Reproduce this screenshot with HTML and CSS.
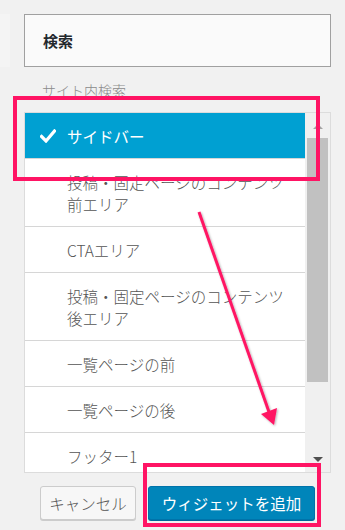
FILE: index.html
```html
<!DOCTYPE html>
<html lang="ja">
<head>
<meta charset="utf-8">
<link rel="stylesheet" href="styles.css">
</head>
<body>
<div class="page">
  <div class="side-stub"></div>
  <div class="panel">
    <div class="title-box">検索</div>
    <div class="label">サイト内検索</div>
    <div class="list-box">
      <ul class="list">
        <li class="item selected"><svg class="check" width="16" height="14" viewBox="0 0 16 14"><path d="M1.5 7.5 L6 12 L14.5 2" fill="none" stroke="#fff" stroke-width="3.2" stroke-linecap="square"/></svg>サイドバー</li>
        <li class="item">投稿・固定ページのコンテンツ前エリア</li>
        <li class="item">CTAエリア</li>
        <li class="item">投稿・固定ページのコンテンツ後エリア</li>
        <li class="item">一覧ページの前</li>
        <li class="item">一覧ページの後</li>
        <li class="item">フッター1</li>
      </ul>
      <div class="scrollbar">
        <span class="arrow-up"></span>
        <div class="thumb"></div>
        <span class="arrow-down"></span>
      </div>
    </div>
    <div class="actions">
      <button class="btn btn-cancel">キャンセル</button>
      <button class="btn btn-primary">ウィジェットを追加</button>
    </div>
  </div>
  <svg class="annot" width="345" height="530" viewBox="0 0 345 530">
    <defs>
      <filter id="sh" x="-20%" y="-20%" width="140%" height="140%">
        <feDropShadow dx="1" dy="1" stdDeviation="1" flood-color="#000" flood-opacity="0.3"/>
      </filter>
    </defs>
    <rect x="15" y="98" width="303" height="81" fill="none" stroke="#ff1464" stroke-width="4"/>
    <rect x="145" y="465" width="174" height="60" fill="none" stroke="#ff1464" stroke-width="4"/>
    <g filter="url(#sh)">
      <line x1="199" y1="212" x2="269" y2="412" stroke="#ff1464" stroke-width="3"/>
      <polygon points="274,425 261,414 277,408" fill="#ff1464"/>
    </g>
  </svg>
</div>
</body>
</html>
```

FILE: styles.css
```css
* { box-sizing: border-box; }
html, body {
  margin: 0;
  padding: 0;
  background: #f1f1f1;
}
body {
  font-family: "Noto Sans CJK JP", "Noto Sans", sans-serif;
  color: #555;
}
.page {
  position: relative;
  width: 345px;
  height: 530px;
  overflow: hidden;
  display: flex;
}
.side-stub {
  width: 10px;
  height: 53px;
  margin-top: 14px;
  background: #f4f4f4;
  flex: none;
}
.panel {
  margin-left: 14px;
  width: 307px;
  display: flex;
  flex-direction: column;
}
.title-box {
  margin-top: 14px;
  height: 53px;
  border: 1px solid #a0a0a0;
  background: #fafafa;
  padding-left: 18px;
  font-size: 15px;
  font-weight: 700;
  color: #23282d;
  line-height: 51px;
}
.label {
  margin-top: 13px;
  padding-left: 18px;
  font-size: 14px;
  line-height: 20px;
  color: #8a8a8a;
  font-weight: 300;
}
.list-box {
  margin-top: 12px;
  height: 361px;
  border: 1px solid #dcdcdc;
  background: #fff;
  display: flex;
  overflow: hidden;
}
.list {
  list-style: none;
  margin: 0;
  padding: 0;
  width: 280px;
  flex: none;
}
.item {
  position: relative;
  padding: 11.5px 14px 11.5px 42px;
  font-size: 15.5px;
  line-height: 22px;
  font-weight: 300;
  border-bottom: 1px solid #d6d6d6;
  color: #555;
}
.item.selected {
  background: #00a0d2;
  color: #fff;
  font-weight: 400;
}
.check {
  position: absolute;
  left: 15px;
  top: 16px;
}
.scrollbar {
  flex: 1;
  background: #f0f0f0;
  display: flex;
  flex-direction: column;
  align-items: center;
  padding: 0 2px;
}
.arrow-up {
  margin-top: 11px;
  width: 0;
  height: 0;
  border-left: 5px solid transparent;
  border-right: 5px solid transparent;
  border-bottom: 5px solid #a3a3a3;
}
.thumb {
  margin-top: 9px;
  width: 21px;
  height: 244px;
  background: #c1c1c1;
}
.arrow-down {
  margin-top: 75px;
  width: 0;
  height: 0;
  border-left: 5px solid transparent;
  border-right: 5px solid transparent;
  border-top: 5px solid #505050;
}
.actions {
  margin-top: 13px;
  padding-left: 16px;
  display: flex;
  gap: 12px;
}
.btn {
  font-family: "Noto Sans CJK JP", "Noto Sans", sans-serif;
  font-size: 15.5px;
  height: 34px;
  border-radius: 3px;
  padding: 0;
  line-height: 32px;
  text-align: center;
  white-space: nowrap;
  cursor: pointer;
}
.btn-cancel {
  width: 96px;
  background: #f7f7f7;
  border: 1px solid #cccccc;
  color: #555;
  font-weight: 300;
  box-shadow: 0 1px 0 #cccccc;
}
.btn-primary {
  width: 167px;
  background: #0085ba;
  border: 1px solid #0073aa;
  color: #fff;
  box-shadow: 0 1px 0 #006799;
}
.annot {
  position: absolute;
  left: 0;
  top: 0;
  pointer-events: none;
}
```
